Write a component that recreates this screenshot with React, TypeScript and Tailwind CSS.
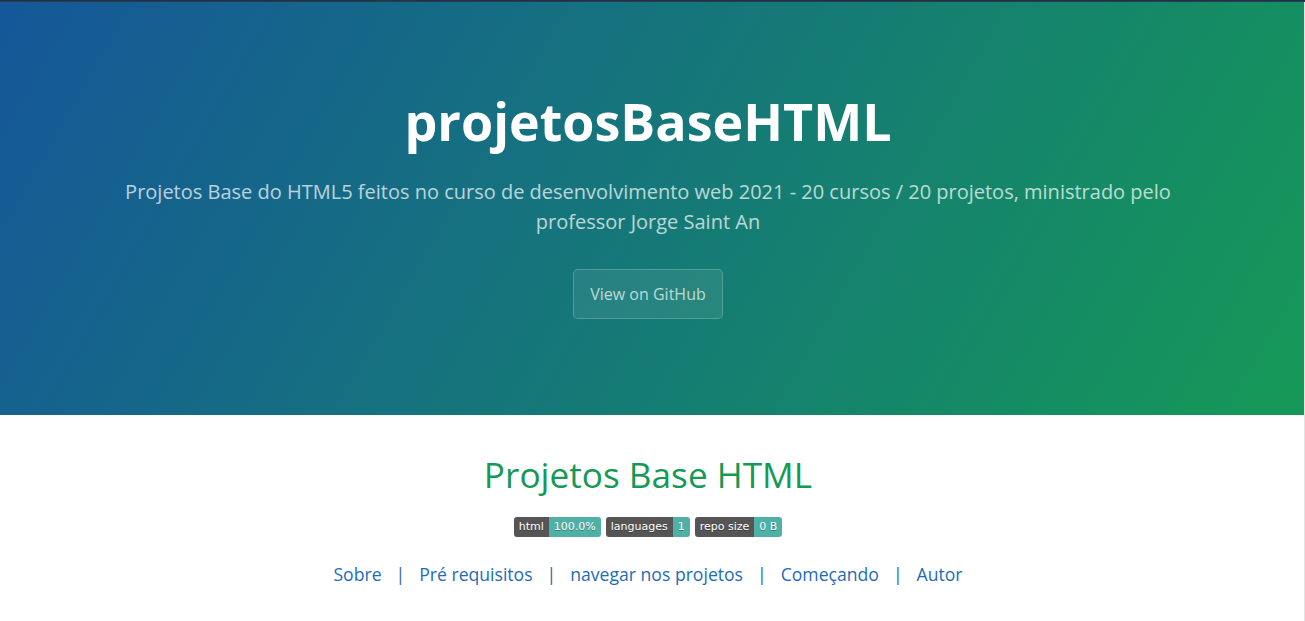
import React from 'react';

const Badge = ({ label, value }: { label: string; value: string }) => (
  <span className="inline-flex h-5 overflow-hidden rounded-[3px] text-[11px] leading-5 text-white [font-family:'DejaVu_Sans',Verdana,sans-serif] [text-shadow:0_1px_0_rgba(1,1,1,0.3)]">
    <span className="bg-[#555] px-[5px]">{label}</span>
    <span className="bg-[#4fb0a6] px-[5px]">{value}</span>
  </span>
);

const navItems = ['Sobre', 'Pré requisitos', 'navegar nos projetos', 'Começando', 'Autor'];

const App: React.FC = () => {
  return (
    <div className="flex min-h-[621px] flex-col bg-white font-['Open_Sans',Helvetica,Arial,sans-serif] text-[#606c71]">
      {/* top edge */}
      <div className="h-px bg-[#2b2f33]" />
      <div className="h-px bg-[#1d3f66]" />

      <div className="flex flex-1">
        <div className="flex-1">
          {/* Page header */}
          <section className="bg-[linear-gradient(120deg,#155799,#159957)] pl-24 pr-[104px] pt-20 pb-20 text-center text-white">
            <h1 className="mb-[1.6px] text-[52px] font-bold leading-[78px]">projetosBaseHTML</h1>
            <h2 className="mt-[16.6px] mb-8 text-xl font-normal leading-[30px] opacity-70">
              Projetos Base do HTML5 feitos no curso de desenvolvimento web 2021 - 20 cursos / 20 projetos, ministrado pelo professor Jorge Saint An
            </h2>
            <a className="mb-4 inline-block rounded-[4.8px] border border-white/20 bg-white/[0.08] px-4 py-3 text-base leading-6 text-white/70">
              View on GitHub
            </a>
          </section>

          {/* Main content */}
          <div className="pr-2">
            <section className="mx-auto max-w-[64rem] px-24 pt-[33px] pb-8 text-[17.6px] leading-[1.5]">
              <h1 className="mb-[17px] text-center text-[35.2px] font-normal leading-[52.8px] text-[#159957]">Projetos Base HTML</h1>
              <div className="mb-6 flex justify-center gap-[5px]">
                <Badge label="html" value="100.0%" />
                <Badge label="languages" value="1" />
                <Badge label="repo size" value="0 B" />
              </div>
              <p className="flex justify-center text-[#1e6bb8]">
                {navItems.map((item, i) => (
                  <React.Fragment key={item}>
                    {i > 0 && <span className="px-[14px] text-[#2a66ad]">|</span>}
                    <a>{item}</a>
                  </React.Fragment>
                ))}
              </p>
            </section>
          </div>
        </div>
        <div className="w-px bg-[#e3e3e3]" />
      </div>
    </div>
  );
};

export default App;
